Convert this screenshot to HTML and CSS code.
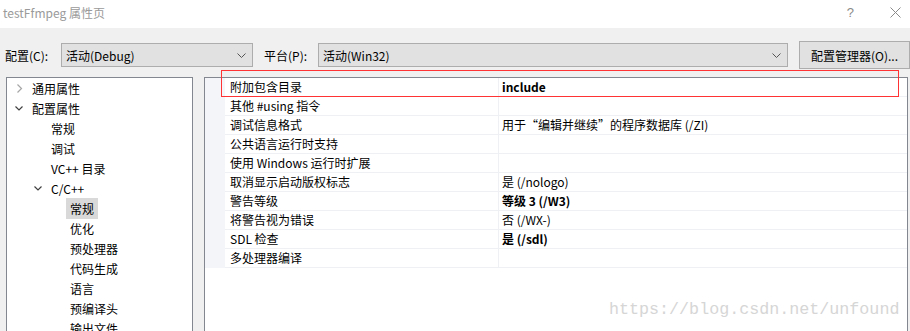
FILE: index.html
```html
<!DOCTYPE html>
<html lang="zh-CN">
<head>
    <meta charset="UTF-8">
    <meta name="viewport" content="width=device-width, initial-scale=1.0">
    <title>testFfmpeg 属性页</title>
    <link rel="stylesheet" href="styles.css">
</head>
<body>
    <div class="window">
        <div class="titlebar">
            <span class="title">testFfmpeg 属性页</span>
            <div class="title-buttons">
                <span class="help-button">?</span>
                <svg class="close-button" width="11" height="11" viewBox="0 0 11 11">
                    <path d="M0.5 0.5 L10.5 10.5 M10.5 0.5 L0.5 10.5" stroke="#8a8a8a" stroke-width="1" fill="none"/>
                </svg>
            </div>
        </div>

        <div class="toolbar">
            <span class="field-label">配置(C):</span>
            <div class="combo combo-config">
                <span>活动(Debug)</span>
                <svg class="combo-arrow" width="9" height="5" viewBox="0 0 9 5"><path d="M0.5 0.5 L4.5 4.5 L8.5 0.5" stroke="#555" fill="none"/></svg>
            </div>
            <span class="field-label platform-label">平台(P):</span>
            <div class="combo combo-platform">
                <span>活动(Win32)</span>
                <svg class="combo-arrow" width="9" height="5" viewBox="0 0 9 5"><path d="M0.5 0.5 L4.5 4.5 L8.5 0.5" stroke="#555" fill="none"/></svg>
            </div>
            <button class="manager-button">配置管理器(O)...</button>
        </div>

        <div class="panels">
            <!-- 左侧属性树 -->
            <ul class="tree">
                <li class="tree-item level-0">
                    <svg class="twisty" width="8" height="9" viewBox="0 0 8 9"><path d="M2.5 0.5 L6.5 4.5 L2.5 8.5" stroke="#a6a6a6" stroke-width="1.2" fill="none"/></svg>
                    <span>通用属性</span>
                </li>
                <li class="tree-item level-0">
                    <svg class="twisty" width="8" height="9" viewBox="0 0 8 9"><path d="M0.5 2.5 L4 6 L7.5 2.5" stroke="#404040" stroke-width="1.2" fill="none"/></svg>
                    <span>配置属性</span>
                </li>
                <li class="tree-item level-1"><span class="twisty-space"></span><span>常规</span></li>
                <li class="tree-item level-1"><span class="twisty-space"></span><span>调试</span></li>
                <li class="tree-item level-1"><span class="twisty-space"></span><span>VC++ 目录</span></li>
                <li class="tree-item level-1">
                    <svg class="twisty" width="8" height="9" viewBox="0 0 8 9"><path d="M0.5 2.5 L4 6 L7.5 2.5" stroke="#404040" stroke-width="1.2" fill="none"/></svg>
                    <span>C/C++</span>
                </li>
                <li class="tree-item level-2"><span class="twisty-space"></span><span class="selected">常规</span></li>
                <li class="tree-item level-2"><span class="twisty-space"></span><span>优化</span></li>
                <li class="tree-item level-2"><span class="twisty-space"></span><span>预处理器</span></li>
                <li class="tree-item level-2"><span class="twisty-space"></span><span>代码生成</span></li>
                <li class="tree-item level-2"><span class="twisty-space"></span><span>语言</span></li>
                <li class="tree-item level-2"><span class="twisty-space"></span><span>预编译头</span></li>
                <li class="tree-item level-2"><span class="twisty-space"></span><span>输出文件</span></li>
            </ul>

            <!-- 右侧属性表 -->
            <div class="grid">
                <div class="grid-row"><span class="gutter"></span><span class="name">附加包含目录</span><span class="value bold">include</span></div>
                <div class="grid-row"><span class="gutter"></span><span class="name">其他 #using 指令</span><span class="value"></span></div>
                <div class="grid-row"><span class="gutter"></span><span class="name">调试信息格式</span><span class="value">用于“编辑并继续”的程序数据库 (/ZI)</span></div>
                <div class="grid-row"><span class="gutter"></span><span class="name">公共语言运行时支持</span><span class="value"></span></div>
                <div class="grid-row"><span class="gutter"></span><span class="name">使用 Windows 运行时扩展</span><span class="value"></span></div>
                <div class="grid-row"><span class="gutter"></span><span class="name">取消显示启动版权标志</span><span class="value">是 (/nologo)</span></div>
                <div class="grid-row"><span class="gutter"></span><span class="name">警告等级</span><span class="value bold">等级 3 (/W3)</span></div>
                <div class="grid-row"><span class="gutter"></span><span class="name">将警告视为错误</span><span class="value">否 (/WX-)</span></div>
                <div class="grid-row"><span class="gutter"></span><span class="name">SDL 检查</span><span class="value bold">是 (/sdl)</span></div>
                <div class="grid-row"><span class="gutter"></span><span class="name">多处理器编译</span><span class="value"></span></div>
            </div>
        </div>

        <div class="highlight-box"></div>
        <div class="watermark">https://blog.csdn.net/unfound</div>
    </div>
</body>
</html>
```

FILE: styles.css
```css
html, body {
    margin: 0;
    height: 100%;
    overflow: hidden;
}

body {
    background-color: #f0f0f0;
    font-family: "Noto Sans CJK SC", "Microsoft YaHei", sans-serif;
    font-size: 12px;
    color: #000;
}

.window {
    position: relative;
    height: 100%;
}

/* 标题栏 */
.titlebar {
    display: flex;
    justify-content: space-between;
    align-items: center;
    height: 28px;
    padding: 0 9px 0 3px;
    background-color: #fff;
    box-sizing: border-box;
}

.title {
    color: #9a9a9a;
    line-height: 24px;
    margin-top: -3px;
}

.title-buttons {
    display: flex;
    align-items: center;
    gap: 36px;
    margin-top: -4px;
}

.help-button {
    color: #8a8a8a;
    font-family: "Liberation Sans", sans-serif;
    font-size: 13px;
}

/* 配置 / 平台 行 */
.toolbar {
    display: flex;
    align-items: center;
    height: 49px;
    padding: 5px 0 0 5px;
    box-sizing: border-box;
}

.field-label {
    width: 56px;
}

.platform-label {
    margin-left: 11px;
    width: 54px;
}

.combo {
    display: flex;
    justify-content: space-between;
    align-items: center;
    height: 24px;
    padding: 0 6px 0 4px;
    border: 1px solid #adadad;
    background-color: #e1e1e1;
    box-sizing: border-box;
}

.combo-config {
    width: 192px;
}

.combo-platform {
    width: 470px;
}

.manager-button {
    margin-left: 11px;
    width: 111px;
    height: 28px;
    border: 1px solid #adadad;
    background-color: #e1e1e1;
    font-family: inherit;
    font-size: 12px;
    color: #000;
    padding: 0;
}

/* 下方面板 */
.panels {
    display: flex;
    gap: 11px;
    padding-left: 6px;
    height: 280px;
}

.tree {
    list-style: none;
    margin: 0;
    padding: 0;
    width: 187px;
    border: 1px solid #828790;
    background-color: #fff;
    box-sizing: border-box;
}

.tree-item {
    display: flex;
    align-items: center;
    height: 20px;
}

.level-0 { padding-left: 8px; }
.level-1 { padding-left: 27px; }
.level-2 { padding-left: 46px; }

.twisty,
.twisty-space {
    width: 8px;
    margin-right: 9px;
    flex-shrink: 0;
}

.tree-item .selected {
    background-color: #d9d9d9;
    padding: 2px 4px;
    margin-left: -4px;
    margin-top: 1px;
}

.grid {
    width: 704px;
    border: 1px solid #828790;
    background-color: #fff;
    box-sizing: border-box;
}

.grid-row {
    display: flex;
    height: 19px;
    line-height: 18px;
}

.gutter {
    width: 20px;
    background-color: #f3f5f9;
    flex-shrink: 0;
}

.name {
    width: 274px;
    padding-left: 5px;
    border-right: 1px solid #eef0f3;
    border-bottom: 1px solid #eef0f3;
    box-sizing: border-box;
    white-space: nowrap;
}

.value {
    flex: 1;
    padding-left: 3px;
    border-bottom: 1px solid #eef0f3;
    white-space: nowrap;
}

.bold {
    font-weight: bold;
}

/* 截图上的标注 */
.highlight-box {
    position: absolute;
    left: 221px;
    top: 70px;
    width: 678px;
    height: 27px;
    border: 1px solid #ff3333;
    box-sizing: border-box;
}

.watermark {
    position: absolute;
    left: 609px;
    top: 300px;
    font-family: "Liberation Mono", monospace;
    font-size: 16.7px;
    color: #d6d6d6;
}
```
